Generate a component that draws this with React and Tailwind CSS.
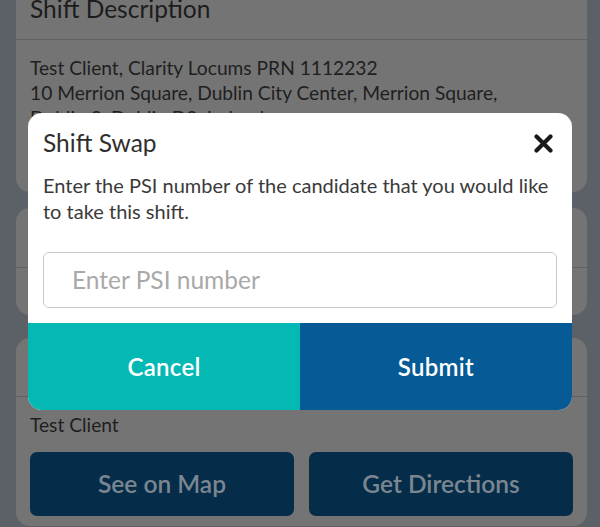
import React from "react";

export default function App() {
  return (
    <div className="relative h-[527px] w-[600px] overflow-hidden bg-[#5b6166] font-['Lato',sans-serif]">
      <div className="flex flex-col pl-4 pr-[13px]">
        {/* Card 1 */}
        <div className="-mt-[20px] rounded-b-[14px] bg-[#747474]">
          <div className="flex h-[60px] items-center border-b border-[#626262] px-[14px] text-[24.5px] text-[#1c1c1c]">
            Shift Description
          </div>
          <div className="h-[152px] px-[14px] pt-[15px] text-[19.2px] leading-[25px] text-[#1f1f1f]">
            <div>Test Client, Clarity Locums PRN 1112232</div>
            <div>10 Merrion Square, Dublin City Center, Merrion Square,</div>
            <div>Dublin 2, Dublin D2, Ireland</div>
          </div>
        </div>
        {/* Card 2 */}
        <div className="mt-4 h-[107px] rounded-[14px] bg-[#747474]">
          <div className="h-[60px] border-b border-[#626262]"></div>
        </div>
        {/* Card 3 */}
        <div className="mt-[23px] rounded-[14px] bg-[#747474] pb-[10px]">
          <div className="h-[59px] border-b border-[#626262]"></div>
          <div className="px-[14px] pt-[15px]">
            <div className="text-[19.2px] leading-[25px] text-[#1f1f1f]">Test Client</div>
            <div className="mt-[15px] grid grid-cols-2 gap-[15px]">
              <div className="flex h-[64px] items-center justify-center rounded-[7px] bg-[#052d4a] text-[24.5px] font-semibold text-[#7b8690]">
                See on Map
              </div>
              <div className="flex h-[64px] items-center justify-center rounded-[7px] bg-[#052d4a] text-[24.5px] font-semibold text-[#7b8690]">
                Get Directions
              </div>
            </div>
          </div>
        </div>
      </div>

      {/* Modal */}
      <div className="absolute left-[28px] top-[113px] w-[544px] overflow-hidden rounded-[14px] bg-white">
        <div className="mt-[15px] flex h-[30px] items-center justify-between pl-[15px] pr-[19px]">
          <div className="text-[24.5px] leading-[30px] text-[#2f2f2f]">Shift Swap</div>
          <svg width="19" height="19" viewBox="0 0 19 19" className="block">
            <path d="M2.5 2.5 L16.5 16.5 M16.5 2.5 L2.5 16.5" stroke="#1a1a1a" strokeWidth="4.2" strokeLinecap="round" />
          </svg>
        </div>
        <div className="mt-[14px] px-[15px] text-[20px] leading-[26px] text-[#3a3a3a]">
          Enter the PSI number of the candidate that you would like to take this shift.
        </div>
        <div className="mx-[15px] mt-[28px] flex h-[56px] items-center rounded-[6px] border border-[#cacaca] px-[28px] text-[24.5px] text-[#a9a9a9]">
          Enter PSI number
        </div>
        <div className="mt-[15px] grid h-[87px] grid-cols-2">
          <div className="flex items-center justify-center bg-[#04b9b4] text-[24px] font-semibold tracking-[0.3px] text-white">
            Cancel
          </div>
          <div className="flex items-center justify-center bg-[#065a95] text-[24px] font-semibold tracking-[0.3px] text-white">
            Submit
          </div>
        </div>
      </div>
    </div>
  );
}
